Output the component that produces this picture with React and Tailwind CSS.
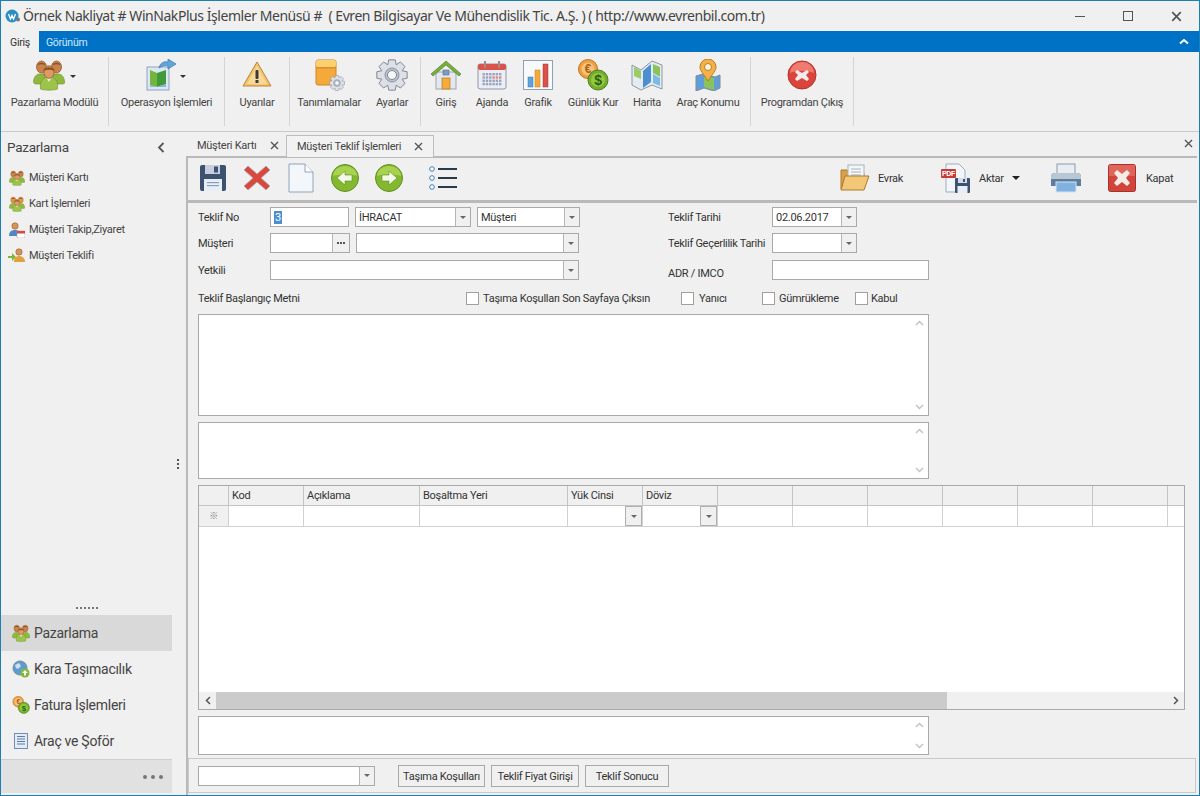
import React from "react";

const People = ({ s = 32, tone = "#c9824a" }) => (
  <svg width={s} height={s} viewBox="0 0 32 32">
    <g stroke="#6f8f2a" strokeWidth=".6">
      <path d="M0.500 23c0-5 3-8 6-8h5v10H3c-1.500 0-2.500-1-2.500-2z" fill="#8fb83e" />
      <path d="M31.500 23c0-5-3-8-6-8h-5v10h9c1.500 0 2.500-1 2.500-2z" fill="#8fb83e" />
    </g>
    <g stroke="#8a4f22" strokeWidth=".7">
      <ellipse cx="8.500" cy="8" rx="5" ry="6" fill={tone} />
      <ellipse cx="23.500" cy="8" rx="5" ry="6" fill={tone} />
    </g>
    <path d="M4.500 6c1-3 7-3 8 0-3-1-5-1-8 0zM19.500 6c1-3 7-3 8 0-3-1-5-1-8 0z" fill="#8a4f22" />
    <path d="M7.500 30c-1-9 3-12 8.500-12s9.500 3 8.500 12c-3 1.500-14 1.500-17 0z" fill="#9cc44a" stroke="#6f8f2a" strokeWidth=".6" />
    <path d="M13 18l3 5 3-5z" fill="#e8f0d0" />
    <ellipse cx="16" cy="13" rx="5.200" ry="6.300" fill="#dd9a62" stroke="#8a4f22" strokeWidth=".7" />
    <path d="M10.800 12c0-5 10.400-5 10.400 0-3-1.800-7.400-1.800-10.400 0z" fill="#8a4f22" />
  </svg>
);

const Caret = ({ c = "#333" }) => <span className="inline-block w-0 h-0 border-l-[3px] border-r-[3px] border-t-[3px] border-l-transparent border-r-transparent" style={{ borderTopColor: c }} />;
const BigCaret = () => <span className="inline-block w-0 h-0 border-l-[4px] border-r-[4px] border-t-[4px] border-l-transparent border-r-transparent border-t-[#222]" />;

const Operasyon = () => (
  <svg width="32" height="32" viewBox="0 0 32 32">
    <rect x="2" y="8" width="22" height="23" fill="#dbe7f2" stroke="#8ea3b8" />
    <path d="M5 11l7 3v14l-7-2z" fill="#74b53f" />
    <path d="M12 14l9-3v14l-9 3z" fill="#3f9a3a" />
    <path d="M5 26l7 2 9-3v3H5z" fill="#7fb6de" />
    <path d="M14 9c1-5 5-7 9-6V0l8 5-8 5V7c-3-1-6 0-9 2z" fill="#5ea6dc" stroke="#3a78ad" strokeWidth=".7" />
  </svg>
);
const Warning = () => (
  <svg width="30" height="30" viewBox="0 0 30 30">
    <path d="M15 2L29 26H1z" fill="#f4c36a" stroke="#b9853a" strokeLinejoin="round" />
    <path d="M15 6L25 24H5z" fill="#f8d99a" />
    <rect x="13.500" y="10" width="3" height="9" rx="1" fill="#3a3a3a" />
    <rect x="13.500" y="20" width="3" height="3" fill="#3a3a3a" />
  </svg>
);
const gearPath = (() => {
  const pts = [];
  const n = 8;
  for (let i = 0; i < n; i++) {
    const a = (i / n) * Math.PI * 2;
    const step = (Math.PI * 2) / n;
    [[-0.5, 11], [-0.27, 15.5], [0.27, 15.5], [0.5, 11]].forEach(([o, r]) => {
      const t = a + o * step;
      pts.push((16 + r * Math.sin(t)).toFixed(2) + " " + (16 - r * Math.cos(t)).toFixed(2));
    });
  }
  return "M" + pts.join("L") + "Z";
})();
const Gear = ({ s = 32 }) => (
  <svg width={s} height={s} viewBox="0 0 32 32">
    <path d={gearPath} fill="#dde1e7" stroke="#7e8794" strokeLinejoin="round" />
    <circle cx="16" cy="16" r="7" fill="#b9c1cc" stroke="#8d96a3" />
    <circle cx="16" cy="16" r="4.500" fill="#f6f7f9" stroke="#7e8794" />
  </svg>
);
const Tanim = () => (
  <svg width="32" height="32" viewBox="0 0 32 32">
    <rect x="3" y="1" width="20" height="25" rx="2" fill="#f4a93a" stroke="#cf8420" />
    <rect x="3" y="1" width="20" height="7" rx="2" fill="#fbd070" />
    <rect x="3" y="8" width="20" height="1.500" fill="#d98f28" />
    <g transform="translate(16 16)"><Gear s={16} /></g>
  </svg>
);
const House = () => (
  <svg width="32" height="32" viewBox="0 0 32 32">
    <rect x="6" y="13" width="20" height="17" fill="#e4e8ed" stroke="#9ba6b3" />
    <path d="M1 15L16 2l15 13-2 2L16 6 3 17z" fill="#79ad3c" stroke="#55822a" strokeWidth=".7" />
    <rect x="13" y="11" width="6" height="5" fill="#7f9cc0" stroke="#52708f" strokeWidth=".6" />
    <rect x="12" y="19" width="8" height="11" fill="#f5ac3c" stroke="#b67a20" strokeWidth=".7" />
  </svg>
);
const Calendar = () => {
  const cells = [];
  for (let y = 0; y < 4; y++) for (let x = 0; x < 6; x++) cells.push(<rect key={x + "-" + y} x={5.500 + x * 3.300} y={13 + y * 3.300} width="2.400" height="2.400" fill={y === 1 && x > 2 ? "#d88" : "#9aa3c0"} />);
  return (
    <svg width="30" height="30" viewBox="0 0 30 30">
      <rect x="1" y="4" width="28" height="25" rx="2" fill="#eceef3" stroke="#8d97a8" />
      <rect x="1" y="4" width="28" height="6" rx="2" fill="#d9534a" />
      <rect x="7" y="1" width="2" height="7" fill="#a88" />
      <rect x="21" y="1" width="2" height="7" fill="#a88" />
      {cells}
    </svg>
  );
};
const Chart = () => (
  <svg width="30" height="30" viewBox="0 0 30 30">
    <rect x=".5" y=".5" width="29" height="29" fill="#f7f9fb" stroke="#8ea0b4" />
    <rect x="5" y="17" width="5" height="10" fill="#5ea3dc" stroke="#3a78ad" strokeWidth=".5" />
    <rect x="12" y="10" width="5" height="17" fill="#f4a93a" stroke="#c27f20" strokeWidth=".5" />
    <rect x="20" y="4" width="5" height="23" fill="#d9534a" stroke="#a53a32" strokeWidth=".5" />
  </svg>
);
const Coins = ({ s = 32 }) => (
  <svg width={s} height={s} viewBox="0 0 32 32">
    <circle cx="11" cy="10" r="9.500" fill="#ee9f3e" stroke="#b9772a" />
    <circle cx="11" cy="10" r="6.500" fill="#f8c27a" />
    <text x="11" y="14" textAnchor="middle" fontSize="12" fontWeight="700" fill="#a85f18" fontFamily="Liberation Sans, sans-serif">€</text>
    <circle cx="21" cy="21" r="10" fill="#76ad2c" stroke="#4f7e1c" />
    <circle cx="21" cy="21" r="7" fill="#8fca3f" />
    <text x="21" y="26" textAnchor="middle" fontSize="14" fontWeight="700" fill="#2f5f10" fontFamily="Liberation Sans, sans-serif">$</text>
  </svg>
);
const MapIcon = () => (
  <svg width="32" height="32" viewBox="0 0 32 32">
    <path d="M1 6l9 5 11-9 10 4v24l-10-4-11 5-9-5z" fill="#e5ebf2" stroke="#8a97a6" />
    <path d="M3 8l7 4v8l-7-3z" fill="#9ccb62" />
    <path d="M12 12l8-7v18l-8 6z" fill="#4a8fd0" />
    <path d="M22 5l7 3v10l-7-4z" fill="#8cc25a" />
    <path d="M22 15l7 4v8l-7-3z" fill="#7db8e6" />
  </svg>
);
const Pin = () => (
  <svg width="32" height="32" viewBox="0 0 32 32">
    <path d="M4 17l7-2 12 3 5-2v13l-6 3-10-3-8 3z" fill="#5f9ed8" stroke="#7f8d9c" />
    <path d="M12 18l10 1v12l-10-3z" fill="#8cc25a" />
    <path d="M16 22C11 14 8 12 8 8a8 8 0 0 1 16 0c0 4-3 6-8 14z" fill="#f4b14a" stroke="#b97d22" />
    <circle cx="16" cy="8" r="3.500" fill="#fff4dd" stroke="#b97d22" />
  </svg>
);
const ExitIcon = () => (
  <svg width="30" height="30" viewBox="0 0 30 30">
    <circle cx="15" cy="15" r="14" fill="#d9443c" stroke="#b8312a" />
    <path d="M3 13a12 11 0 0 1 24 0c-6-3-18-3-24 0z" fill="#ee7a70" />
    <path d="M10 10l5 3 5-3 2 2-3 3 3 4-2 2-5-3-5 3-2-2 3-4-3-3z" fill="#f7eaea" />
  </svg>
);

const Save = () => (
  <svg width="28" height="28" viewBox="0 0 28 28">
    <path d="M1 3a2 2 0 0 1 2-2h22a2 2 0 0 1 2 2v22a2 2 0 0 1-2 2H3a2 2 0 0 1-2-2z" fill="#3c5270" />
    <rect x="6" y="1" width="15" height="9" fill="#c6cfdb" />
    <rect x="15" y="2.500" width="4" height="6" fill="#3c5270" />
    <rect x="5" y="15" width="18" height="12" fill="#e8eef5" />
    <rect x="8" y="18" width="12" height="1.200" fill="#8aa0b8" />
    <rect x="8" y="21" width="12" height="1.200" fill="#8aa0b8" />
  </svg>
);
const RedX = () => (
  <svg width="28" height="28" viewBox="0 0 28 28">
    <path d="M5 2l9 8 9-8 4 4-9 8 9 8-4 4-9-8-9 8-4-4 9-8-9-8z" fill="#d8483e" stroke="#aaa" strokeWidth=".8" />
  </svg>
);
const Doc = () => (
  <svg width="26" height="30" viewBox="0 0 26 30">
    <path d="M1 1h16l8 8v20H1z" fill="#f3f7fc" stroke="#8fa4bc" />
    <path d="M17 1v8h8" fill="#fff" stroke="#8fa4bc" />
  </svg>
);
const Arrow = ({ dir }) => (
  <svg width="28" height="28" viewBox="0 0 28 28">
    <circle cx="14" cy="14" r="13.500" fill="#84b82f" stroke="#5f8f1f" />
    <path d="M2 12a12 10 0 0 1 24 0c-6-2-18-2-24 0z" fill="#a9d34f" />
    <path d={dir === "l" ? "M6 14l8-7v4h7v6h-7v4z" : "M22 14l-8-7v4H7v6h7v4z"} fill="#f4f8e8" stroke="#5f8f1f" strokeWidth=".6" />
  </svg>
);
const ListIcon = () => (
  <svg width="28" height="24" viewBox="0 0 28 24">
    {[3, 12, 21].map((y) => (
      <g key={y}>
        <circle cx="3" cy={y} r="2.300" fill="#fff" stroke="#3a7fc0" />
        <rect x="9" y={y - 1} width="19" height="2" fill="#2a3a4a" />
      </g>
    ))}
  </svg>
);
const Folder = () => (
  <svg width="30" height="28" viewBox="0 0 30 28">
    <path d="M1 6h6l2 3h15v16H1z" fill="#d99f45" stroke="#ac7a2c" />
    <rect x="8" y="1" width="16" height="18" fill="#f4f7fa" stroke="#a8b2bd" />
    <path d="M11 5h10M11 8h10M11 11h10" stroke="#a8b2bd" />
    <path d="M1 26l4-14h24l-5 14z" fill="#f2c878" stroke="#ac7a2c" />
  </svg>
);
const Pdf = () => (
  <svg width="30" height="30" viewBox="0 0 30 30">
    <path d="M5 1h13l6 6v22H5z" fill="#f2f5f9" stroke="#9fadbd" />
    <rect x="0" y="6" width="15" height="9" rx="1" fill="#c93c36" />
    <text x="7.500" y="13.200" textAnchor="middle" fontSize="7" fontWeight="700" fill="#fff" fontFamily="Liberation Sans, sans-serif">PDF</text>
    <rect x="14" y="15" width="15" height="15" rx="1" fill="#3c5270" />
    <rect x="17" y="15" width="9" height="5" fill="#d5dce5" />
    <rect x="22" y="16" width="2" height="3" fill="#3c5270" />
    <rect x="16.500" y="23" width="10" height="7" fill="#e8eef5" />
  </svg>
);
const Printer = () => (
  <svg width="32" height="30" viewBox="0 0 32 30">
    <rect x="7" y="1" width="18" height="11" fill="#e8edf3" stroke="#8b9aab" />
    <path d="M1 14a4 4 0 0 1 4-4h22a4 4 0 0 1 4 4v9H1z" fill="#5d7d9f" />
    <path d="M1 14a4 4 0 0 1 4-4h22a4 4 0 0 1 4 4v2H1z" fill="#b9c6d4" />
    <rect x="6" y="19" width="20" height="10" fill="#7fb2e0" stroke="#d8e3ee" />
  </svg>
);
const KapatIcon = () => (
  <svg width="28" height="28" viewBox="0 0 28 28">
    <rect x=".5" y=".5" width="27" height="27" rx="2" fill="#d2453c" stroke="#a5322b" />
    <rect x="1" y="1" width="26" height="11" fill="#e0645a" />
    <path d="M9 6l5 4 5-4 3 3-4 5 4 5-3 3-5-4-5 4-3-3 4-5-4-5z" fill="#f6ece6" />
  </svg>
);
const Globe = () => (
  <svg width="18" height="18" viewBox="0 0 18 18">
    <circle cx="8" cy="8" r="7" fill="#5d9cd3" stroke="#7a8a99" />
    <path d="M3 5l4-2 2 3-3 3-2-1zM9 10l3-1 1 2-3 2z" fill="#d5dde5" />
    <circle cx="13" cy="13" r="4.500" fill="#7fb632" />
    <path d="M13 10l3 3h-2v2.500h-2V13h-2z" fill="#fff" />
  </svg>
);
const ListDoc = () => (
  <svg width="14" height="16" viewBox="0 0 14 16">
    <rect x=".5" y=".5" width="13" height="15" fill="#e3ecf6" stroke="#6f8fb3" />
    <path d="M3 3.500h8M3 6h8M3 8.500h8M3 11h8" stroke="#5c7ea6" />
  </svg>
);
const UserCal = () => (
  <svg width="16" height="16" viewBox="0 0 16 16">
    <circle cx="6" cy="4" r="3.200" fill="#d9935a" stroke="#8a4f22" strokeWidth=".5" />
    <path d="M0 14c0-4 2-6 6-6s5 2 5 6z" fill="#4f86c6" />
    <rect x="8" y="9" width="8" height="7" fill="#fff" stroke="#999" strokeWidth=".5" />
    <rect x="8" y="9" width="8" height="2.500" fill="#d9483e" />
  </svg>
);
const ArrowPeople = () => (
  <svg width="17" height="16" viewBox="0 0 17 16">
    <path d="M0 8h4V5l4 4-4 4v-3H0z" fill="#7fb632" />
    <circle cx="11" cy="4" r="3.200" fill="#d9935a" stroke="#8a4f22" strokeWidth=".5" />
    <path d="M6 14c0-4 2-6 5-6s6 2 6 6z" fill="#e0a13f" />
  </svg>
);

const Sep = () => <div className="w-px bg-[#d4d4d4] my-[5px] self-stretch shrink-0" />;
const RItem = ({ w, icon, label, caret }) => (
  <div className={`${w} shrink-0 flex flex-col items-center relative`}>
    <div className={`h-[32px] mt-[7px] flex items-center justify-center ${caret ? "pr-[11px]" : ""}`}>{icon}</div>
    {caret && <span className={`absolute top-[23px] flex ${caret}`}><Caret /></span>}
    <div className="mt-[4px] text-[11px] leading-[16px] text-[#444] whitespace-nowrap">{label}</div>
  </div>
);

const Arr = () => <Caret c="#666" />;
const Box = ({ w, children, sel }) => <div className={`${w} h-[20px] bg-white border border-[#a9a9a9] text-[11px] leading-[19px] pl-[3px] text-[#333] shrink-0 truncate`}>{sel ? <span className="bg-[#4a90d0] text-white px-[1px]">{children}</span> : children}</div>;
const Combo = ({ w, text }) => (
  <div className={`${w} h-[20px] bg-white border border-[#a9a9a9] flex shrink-0 text-[11px] leading-[19px] text-[#333]`}>
    <div className="flex-1 pl-[3px] whitespace-nowrap overflow-hidden">{text}</div>
    <div className="w-[15px] border-l border-[#b5b5b5] bg-[#f0f0f0] flex items-center justify-center"><Arr /></div>
  </div>
);
const Label = ({ w, children, cls = "" }) => <div className={`${w} h-[20px] shrink-0 text-[11px] leading-[22px] text-[#333] whitespace-nowrap ${cls}`}>{children}</div>;
const Check = () => <span className="w-[13px] h-[13px] bg-white border border-[#a0a0a0] shrink-0 block" />;
const Memo = ({ h, mt }) => (
  <div className={`${h} ${mt} w-[731px] shrink-0 bg-white border border-[#a9a9a9] relative`}>
    <svg className="absolute right-[4px] top-[5px]" width="9" height="6" viewBox="0 0 9 6"><path d="M1 5l3.500-3.500L8 5" fill="none" stroke="#c4c4c4" strokeWidth="1.500" /></svg>
    <svg className="absolute right-[4px] bottom-[5px]" width="9" height="6" viewBox="0 0 9 6"><path d="M1 1l3.500 3.500L8 1" fill="none" stroke="#c4c4c4" strokeWidth="1.500" /></svg>
  </div>
);
const Side = ({ icon, label }) => (
  <div className="h-[26px] flex items-center pl-[7px] text-[11px] text-[#444]">
    <span className="w-[17px] flex justify-center shrink-0">{icon}</span>
    <span className="ml-[4px] whitespace-nowrap">{label}</span>
  </div>
);
const Nav = ({ icon, label, active }) => (
  <div className={`h-[36px] flex items-center pl-[11px] text-[14px] text-[#444] ${active ? "bg-[#d9d9d9]" : ""}`}>
    <span className="w-[18px] flex justify-center shrink-0">{icon}</span>
    <span className="ml-[4px] whitespace-nowrap">{label}</span>
  </div>
);
const X = ({ s = 9, c = "#555" }) => (
  <svg width={s} height={s} viewBox="0 0 9 9"><path d="M1 1l7 7M8 1L1 8" stroke={c} strokeWidth="1.400" /></svg>
);
const Btn = ({ w, children }) => <div className={`${w} h-[22px] border border-[#a9a9a9] bg-[#f0f0f0] text-[11px] leading-[22px] text-center text-[#333] whitespace-nowrap`}>{children}</div>;

const cols = [
  ["w-[30px]", ""], ["w-[75px]", "Kod"], ["w-[116px]", "Açıklama"], ["w-[148px]", "Boşaltma Yeri"], ["w-[75px]", "Yük Cinsi"], ["w-[75px]", "Döviz"],
  ["w-[75px]", ""], ["w-[75px]", ""], ["w-[75px]", ""], ["w-[75px]", ""], ["w-[75px]", ""], ["w-[75px]", ""],
];

export default function App() {
  return (
    <div className="w-[1200px] h-[796px] bg-[#f0f0f0] border border-[#1b7fb5] flex flex-col overflow-hidden tracking-[-0.28px]" style={{ fontFamily: 'Roboto, sans-serif' }}>
      <div className="h-[30px] flex items-center shrink-0">
        <svg className="ml-[4px]" width="16" height="16" viewBox="0 0 16 16">
          <circle cx="7" cy="8" r="6.500" fill="#2a8fc0" />
          <path d="M3.500 6l2 5 1.500-3.500L8.500 11l2-5" fill="none" stroke="#fff" strokeWidth="1.300" />
          <circle cx="13" cy="11.500" r="2" fill="#777" />
        </svg>
        <div className="ml-[2px] text-[14px] leading-[20px] text-[#444] whitespace-pre tracking-[-0.032em]" style={{ fontFamily: '"Noto Sans", sans-serif' }}>Örnek Nakliyat # WinNakPlus İşlemler Menüsü #  ( Evren Bilgisayar Ve Mühendislik Tic. A.Ş. ) ( http://www.evrenbil.com.tr)</div>
        <div className="ml-auto flex items-center">
          <div className="w-[10px] h-px bg-[#555] mr-[38px]" />
          <div className="w-[10px] h-[10px] border border-[#555] mr-[38px]" />
          <div className="mr-[17px] flex"><X s={11} /></div>
        </div>
      </div>
      <div className="h-[21px] bg-[#0072c6] flex items-stretch shrink-0 text-[10.500px] leading-[24px]">
        <div className="w-[38px] bg-[#f0f0f0] text-[#333] text-center">Giriş</div>
        <div className="ml-[7px] text-[#cfe6f7]">Görünüm</div>
        <svg className="ml-auto mr-[10px] self-center" width="10" height="7" viewBox="0 0 10 7"><path d="M1 5.500l4-3.500 4 3.500" fill="none" stroke="#fff" strokeWidth="2" /></svg>
      </div>
      <div className="h-[80px] flex shrink-0 border-b border-[#c9c9c9]">
        <RItem w="w-[107px]" icon={<People s={32} />} label="Pazarlama Modülü" caret="left-[69px]" />
        <Sep />
        <RItem w="w-[115px]" icon={<Operasyon />} label="Operasyon İşlemleri" caret="left-[71px]" />
        <Sep />
        <RItem w="w-[64px]" icon={<Warning />} label="Uyarılar" />
        <Sep />
        <RItem w="w-[78px]" icon={<Tanim />} label="Tanımlamalar" />
        <RItem w="w-[48px]" icon={<Gear />} label="Ayarlar" />
        <div className="w-[4px]" />
        <Sep />
        <RItem w="w-[50px]" icon={<House />} label="Giriş" />
        <RItem w="w-[42px]" icon={<Calendar />} label="Ajanda" />
        <RItem w="w-[50px]" icon={<Chart />} label="Grafik" />
        <RItem w="w-[60px]" icon={<Coins />} label="Günlük Kur" />
        <RItem w="w-[48px]" icon={<MapIcon />} label="Harita" />
        <RItem w="w-[74px]" icon={<Pin />} label="Araç Konumu" />
        <div className="w-[5px]" />
        <Sep />
        <RItem w="w-[102px]" icon={<ExitIcon />} label="Programdan Çıkış" />
        <Sep />
      </div>
      <div className="flex-1 flex min-h-0">
        <div className="w-[171px] shrink-0 flex flex-col">
          <div className="h-[30px] flex items-center pl-[6px] text-[13.500px] text-[#444]">
            Pazarlama
            <svg className="ml-auto mr-[7px]" width="8" height="11" viewBox="0 0 8 11"><path d="M6.500 1L2 5.500 6.500 10" fill="none" stroke="#555" strokeWidth="1.800" /></svg>
          </div>
          <div className="mt-[3px]">
            <Side icon={<People s={16} />} label="Müşteri Kartı" />
            <Side icon={<People s={16} tone="#e29a3e" />} label="Kart İşlemleri" />
            <Side icon={<UserCal />} label="Müşteri Takip,Ziyaret" />
            <Side icon={<ArrowPeople />} label="Müşteri Teklifi" />
          </div>
          <div className="mt-auto h-[8px] flex justify-center items-center gap-[2px] mb-[3px]">
            {[0, 1, 2, 3, 4, 5].map((i) => <span key={i} className="w-[2px] h-[2px] bg-[#777]" />)}
          </div>
          <Nav icon={<People s={18} />} label="Pazarlama" active />
          <Nav icon={<Globe />} label="Kara Taşımacılık" />
          <Nav icon={<Coins s={18} />} label="Fatura İşlemleri" />
          <Nav icon={<ListDoc />} label="Araç ve Şoför" />
          <div className="h-[34px] bg-[#e1e1e1] border-t border-[#cfcfcf] flex items-center justify-end gap-[4px] pr-[9px] mb-[2px]">
            {[0, 1, 2].map((i) => <span key={i} className="w-[4px] h-[4px] rounded-full bg-[#777]" />)}
          </div>
        </div>
        <div className="w-[14px] shrink-0 flex flex-col items-center justify-center">
          <div className="flex flex-col gap-[2px] mr-[2px]">
            {[0, 1, 2].map((i) => <span key={i} className="w-[2px] h-[2px] bg-[#555]" />)}
          </div>
        </div>
        <div className="flex-1 flex flex-col min-w-0">
          <div className="h-[24px] flex items-end shrink-0 relative text-[11px] text-[#444]">
            <div className="w-[100px] h-[21px] flex items-center pl-[11px]">
              <span className="whitespace-nowrap pt-[1px]">Müşteri Kartı</span>
              <span className="ml-auto mr-[7px] flex"><X /></span>
            </div>
            <div className="w-[148px] h-[22px] mb-[-1px] z-10 flex items-center pl-[10px] bg-[#f2f2f2] border border-b-0 border-[#bdbdbd]">
              <span className="whitespace-nowrap pt-[1px]">Müşteri Teklif İşlemleri</span>
              <span className="ml-auto mr-[10px] flex"><X /></span>
            </div>
            <span className="absolute right-[6px] top-[7px] flex"><X /></span>
          </div>
          <div className="flex-1 min-h-0 flex flex-col border-t-2 border-l-2 border-[#b9b9b9] mr-[2px]">
            <div className="h-[40px] pb-[2px] shrink-0 border-b-[3px] border-[#b9b9b9] flex items-center pl-[11px] box-content">
              <div className="flex items-center">
                <Save />
                <div className="ml-[16px]"><RedX /></div>
                <div className="ml-[17px]"><Doc /></div>
                <div className="ml-[17px]"><Arrow dir="l" /></div>
                <div className="ml-[16px]"><Arrow dir="r" /></div>
                <div className="ml-[26px]"><ListIcon /></div>
              </div>
              <div className="ml-auto flex items-center text-[11px] text-[#333] pr-[21px]">
                <Folder />
                <span className="ml-[8px] w-[28px] pt-[2px]">Evrak</span>
                <div className="ml-[35px]"><Pdf /></div>
                <span className="ml-[8px] w-[33px] pt-[2px]">Aktar</span>
                <BigCaret />
                <div className="ml-[30px]"><Printer /></div>
                <div className="ml-[26px]"><KapatIcon /></div>
                <span className="ml-[10px] w-[30px] pt-[2px]">Kapat</span>
              </div>
            </div>
            <div className="flex-1 min-h-0 pl-[10px] pt-[4px] flex flex-col">
              <div className="flex">
                <div className="w-[382px] shrink-0 flex flex-col">
                  <div className="flex items-center">
                    <Label w="w-[72px]">Teklif No</Label>
                    <Box w="w-[79px]" sel>3</Box>
                    <div className="ml-[6px]"><Combo w="w-[116px]" text="İHRACAT" /></div>
                    <div className="ml-[6px]"><Combo w="w-[103px]" text="Müşteri" /></div>
                  </div>
                  <div className="flex items-center mt-[6px]">
                    <Label w="w-[72px]">Müşteri</Label>
                    <div className="w-[80px] h-[20px] bg-white border border-[#a9a9a9] flex justify-end shrink-0">
                      <div className="w-[17px] border-l border-[#b5b5b5] bg-[#f0f0f0] flex items-center justify-center gap-[1px]">
                        {[0, 1, 2].map((i) => <span key={i} className="w-[2px] h-[2px] bg-[#555]" />)}
                      </div>
                    </div>
                    <div className="ml-[6px]"><Combo w="w-[223px]" /></div>
                  </div>
                  <div className="flex items-center mt-[7px]">
                    <Label w="w-[72px]">Yetkili</Label>
                    <Combo w="w-[309px]" />
                  </div>
                </div>
                <div className="ml-[88px] flex flex-col">
                  <div className="flex items-center">
                    <Label w="w-[104px]">Teklif Tarihi</Label>
                    <Combo w="w-[85px]" text="02.06.2017" />
                  </div>
                  <div className="flex items-center mt-[6px]">
                    <Label w="w-[104px]">Teklif Geçerlilik Tarihi</Label>
                    <Combo w="w-[85px]" />
                  </div>
                  <div className="flex items-center mt-[7px] h-[20px]">
                    <Label w="w-[104px]" cls="mt-[6px]">ADR / IMCO</Label>
                    <Box w="w-[157px]" />
                  </div>
                </div>
              </div>
              <div className="flex items-center mt-[8px] h-[20px] shrink-0">
                <Label w="w-[268px]">Teklif Başlangıç Metni</Label>
                <Check />
                <Label w="w-[198px]" cls="ml-[4px]">Taşıma Koşulları Son Sayfaya Çıksın</Label>
                <Check />
                <Label w="w-[63px]" cls="ml-[5px]">Yanıcı</Label>
                <Check />
                <Label w="w-[76px]" cls="ml-[4px]">Gümrükleme</Label>
                <Check />
                <Label w="w-[40px]" cls="ml-[3px]">Kabul</Label>
              </div>
              <Memo h="h-[102px]" mt="mt-[6px]" />
              <Memo h="h-[57px]" mt="mt-[6px]" />
              <div className="mt-[6px] w-[987px] h-[225px] bg-white border border-[#a9a9a9] flex flex-col shrink-0">
                <div className="flex h-[20px] bg-[#f0f0f0] border-b border-[#c4c4c4] shrink-0">
                  {cols.map(([w, t], i) => (
                    <div key={i} className={`${w} shrink-0 border-r border-[#c4c4c4] text-[11px] leading-[20px] pl-[3px] text-[#333] whitespace-nowrap`}>{t}</div>
                  ))}
                </div>
                <div className="flex h-[21px] border-b border-[#d0d0d0] shrink-0">
                  {cols.map(([w], i) => (
                    <div key={i} className={`${w} shrink-0 border-r border-[#d0d0d0] flex ${i === 0 ? "bg-[#f0f0f0] items-center justify-center" : "justify-end"}`}>
                      {i === 0 && <span className="text-[9px] leading-[10px] text-[#777]" style={{ fontFamily: '"Noto Sans CJK SC", sans-serif' }}>※</span>}
                      {(i === 4 || i === 5) && (
                        <div className="w-[17px] h-[20px] bg-[#f0f0f0] border border-[#b0b0b0] flex items-center justify-center"><Arr /></div>
                      )}
                    </div>
                  ))}
                </div>
                <div className="flex-1" />
                <div className="h-[17px] bg-[#f0f0f0] flex items-center shrink-0">
                  <div className="w-[17px] flex justify-center">
                    <svg width="6" height="9" viewBox="0 0 6 9"><path d="M5 1L1.500 4.500 5 8" fill="none" stroke="#555" strokeWidth="1.500" /></svg>
                  </div>
                  <div className="w-[731px] h-[17px] bg-[#cbcbcb]" />
                  <div className="ml-auto w-[17px] flex justify-center">
                    <svg width="6" height="9" viewBox="0 0 6 9"><path d="M1 1l3.500 3.500L1 8" fill="none" stroke="#555" strokeWidth="1.500" /></svg>
                  </div>
                </div>
              </div>
              <Memo h="h-[39px]" mt="mt-[6px]" />
              <div className="ml-[-10px] mt-[3px] h-[35px] border border-[#c9c9c9] flex items-center pl-[9px] mr-[1px] shrink-0">
                <Combo w="w-[177px]" />
                <div className="ml-[23px]"><Btn w="w-[87px]">Taşıma Koşulları</Btn></div>
                <div className="ml-[6px]"><Btn w="w-[88px]">Teklif Fiyat Girişi</Btn></div>
                <div className="ml-[6px]"><Btn w="w-[84px]">Teklif Sonucu</Btn></div>
              </div>
            </div>
          </div>
        </div>
      </div>
    </div>
  );
}
